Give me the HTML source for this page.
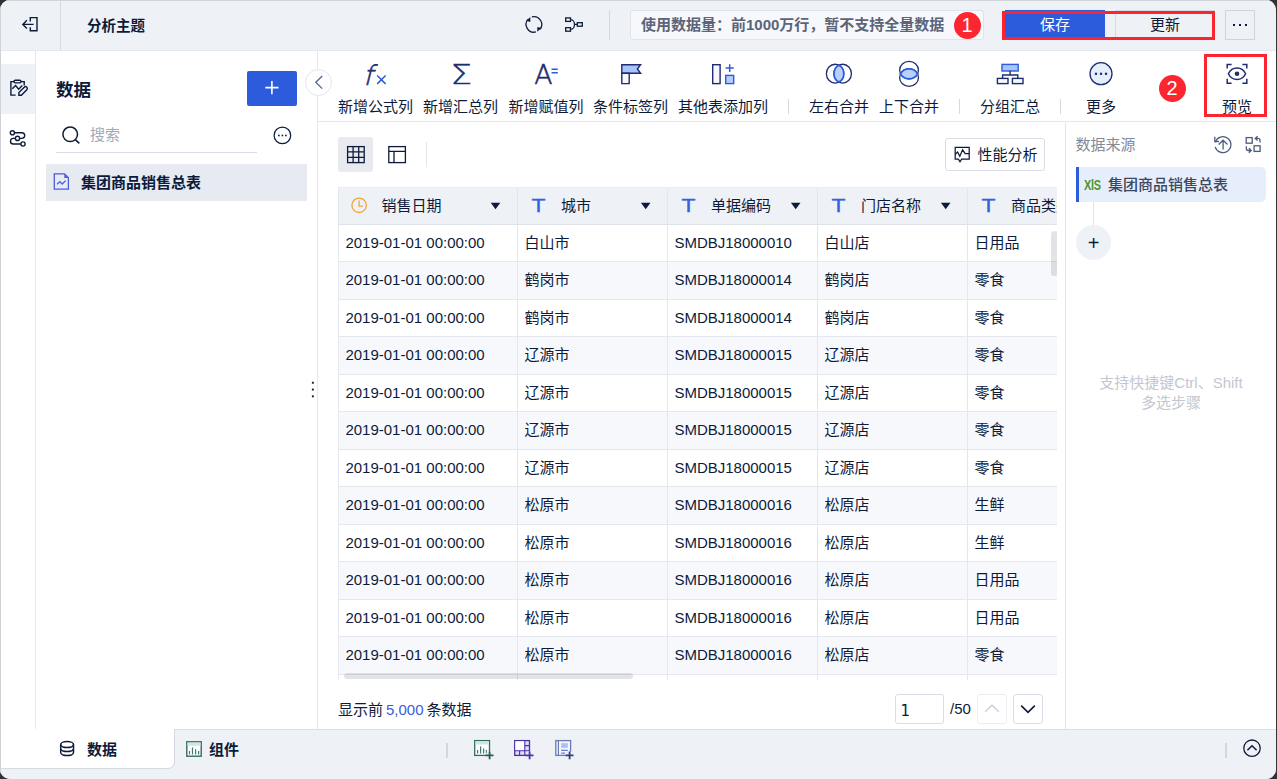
<!DOCTYPE html>
<html lang="zh-CN">
<head>
<meta charset="utf-8">
<title>分析主题</title>
<style>
*{box-sizing:border-box;margin:0;padding:0}
html,body{width:1277px;height:779px;overflow:hidden;background:#323232}
body{font-family:"Liberation Sans","Noto Sans CJK SC",sans-serif;font-size:15px;color:#0d1b3a;position:relative}
.abs{position:absolute}
svg{position:absolute;overflow:visible}
#win{position:absolute;left:0;top:0;width:1276px;height:779px;background:#fff;border-radius:10px;overflow:hidden}
#edgeT{position:absolute;left:0;top:0;width:1276px;height:1px;background:#d0d3da;z-index:9}
#edgeL{position:absolute;left:0;top:0;width:1px;height:779px;background:#cfd1d6;z-index:9}
/* top bar */
#topbar{position:absolute;left:0;top:0;width:1276px;height:51px;background:#eef1f6;border-bottom:1px solid #e4e7ee}
#title{position:absolute;left:87px;top:16px;font-size:14.5px;font-weight:bold;line-height:20px;color:#0d1b3a;white-space:nowrap}
.vline{position:absolute;width:1px;background:#d5d9e2}
#infobox{position:absolute;left:630px;top:10px;width:354px;height:30px;background:#f7f8fb;border:1px solid #dfe3ea;border-radius:3px}
#infobox span{position:absolute;left:10px;top:4px;line-height:20px;font-weight:bold;color:#5b6478;white-space:nowrap}
.redc{position:absolute;width:27px;height:27px;border-radius:50%;background:#fc2630;color:#fff;font-size:20px;line-height:27px;text-align:center}
.redbox{position:absolute;border:3px solid #fb2530;z-index:5}
#btnSave{position:absolute;left:1005px;top:10px;width:100px;height:30px;background:#2c5cdc;color:#fff;text-align:center;line-height:29px;font-size:15px}
#btnUpd{position:absolute;left:1115px;top:10px;width:100px;height:30px;border:1px solid #d5d9e2;color:#0d1b3a;text-align:center;line-height:27px;font-size:15px}
#btnMore{position:absolute;left:1225px;top:10px;width:30px;height:30px;border:1px solid #cdd2dd}
#btnMore i{position:absolute;top:13px;width:2px;height:2px;background:#0d1b3a}
/* left sidebar */
#lside{position:absolute;left:0;top:51px;width:36px;height:678px;background:#fff;border-right:1px solid #e4e7ee}
#lside .act{position:absolute;left:0;top:13px;width:35px;height:50px;background:#eef1f6}
#dpanel{position:absolute;left:36px;top:51px;width:282px;height:678px;background:#fff;border-right:1px solid #e4e7ee}
#dtitle{position:absolute;left:20px;top:27px;font-size:17.5px;font-weight:bold;line-height:24px;white-space:nowrap}
#addbtn{position:absolute;left:211px;top:20px;width:50px;height:35px;background:#2c5cdc;border-radius:2px}
#search{position:absolute;left:20px;top:66px;width:201px;height:36px;border-bottom:1px solid #d9dde6}
#search span{position:absolute;left:34px;top:8px;line-height:20px;color:#a3a9b8}
#ditem{position:absolute;left:10px;top:113px;width:261px;height:37px;background:#e8eaf2}
#ditem span{position:absolute;left:35px;top:9px;line-height:20px;font-weight:bold;white-space:nowrap}
#collapse{position:absolute;left:305px;top:69px;width:27px;height:27px;border-radius:50%;background:#fff;border:1px solid #e2e5ec;z-index:6}
/* toolbar */
#toolbar{position:absolute;left:318px;top:51px;width:958px;height:71px;background:#fff;border-bottom:1px solid #e4e7ee}
.tl{position:absolute;top:46px;line-height:20px;white-space:nowrap;text-align:center;color:#0d1b3a}
/* main */
#main{position:absolute;left:318px;top:122px;width:748px;height:607px;background:#fff;border-right:1px solid #e4e7ee}
#vtog{position:absolute;left:20px;top:15px;width:35px;height:35px;background:#e8eaef;border-radius:3px}
#perf{position:absolute;left:627px;top:16px;width:100px;height:33px;border:1px solid #d9dde6;border-radius:3px}
#perf span{position:absolute;left:31.5px;top:6px;line-height:20px;white-space:nowrap}
#tbl{position:absolute;left:20px;top:65px;width:719px;height:493px;overflow:hidden;border-left:1px solid #e4e7ee}
#tbl .in{position:absolute;left:0;top:0;width:900px}
.th{position:relative;height:37.5px;background:#eef1f6;border-top:1px solid #e9ecf2;border-bottom:1px solid #dfe3ea;display:flex}
.hc{position:relative;width:150px;height:100%;border-right:1px solid #e3e6ee;flex:none}
.hc.c1{width:179px}
.hc span{position:absolute;left:43px;top:8px;line-height:20px;white-space:nowrap}
.tr{height:37.5px;display:flex;border-bottom:1px solid #e4e7ee}
.tr.ev{background:#f7f8fc}
.td{width:150px;flex:none;border-right:1px solid #e4e7ee;padding:8px 0 0 6.4px;line-height:20px;white-space:nowrap;overflow:hidden}
.td.c1{width:179px}
#vsb{position:absolute;left:712px;top:44px;width:7px;height:45px;border-radius:4px;background:rgba(110,115,130,.2)}
#hsb{position:absolute;left:5px;top:486px;width:289px;height:6px;border-radius:3px;background:rgba(110,115,135,.2)}
#foot{position:absolute;left:20px;top:578px;line-height:20px;white-space:nowrap}
#foot em{font-style:normal;color:#3b5bdb;margin:0 3px}
#pginp{position:absolute;left:577px;top:572px;width:49px;height:30px;border:1px solid #d9dde6;border-radius:3px;font-size:15px;line-height:33px;padding-left:4.4px;font-family:"DejaVu Sans","Liberation Sans",sans-serif}
#pgtot{position:absolute;left:632px;top:576.5px;line-height:20px}
.pgb{position:absolute;top:572px;width:30px;height:30px;border:1px solid #d9dde6;border-radius:3px}
/* right panel */
#rpanel{position:absolute;left:1066px;top:122px;width:210px;height:607px;background:#fff}
#rtitle{position:absolute;left:9.5px;top:13px;line-height:20px;color:#838a9a;white-space:nowrap}
#ritem{position:absolute;left:10px;top:45px;width:190px;height:35px;background:#e6eefc;border-left:3px solid #2c5cdc;border-radius:0 5px 5px 0}
#ritem .x{position:absolute;left:5px;top:8px;line-height:20px;font-size:14px;font-weight:bold;color:#4a962c;letter-spacing:-0.3px;transform:scaleX(.78);transform-origin:left center}
#ritem .t{position:absolute;left:29px;top:8px;line-height:20px;color:#3d4860;font-weight:500;white-space:nowrap}
#rconn{position:absolute;left:27px;top:80px;width:1px;height:24px;background:#dfe3ea}
#rplus{position:absolute;left:10px;top:103px;width:35px;height:35px;border-radius:50%;background:#eef1f6;text-align:center;line-height:36px;font-size:20px;color:#0d1b3a}
#rhint{position:absolute;left:10px;top:251px;width:190px;text-align:center;line-height:20px;color:#c3c7d1}
/* bottom bar */
#bottombar{position:absolute;left:0;top:729px;width:1276px;height:50px;background:#eef1f6;border-top:1px solid #d9dde6}
#tab1{position:absolute;left:0;top:-1px;width:175px;height:40px;background:#fff;border-right:1px solid #d5d9e2;border-bottom:1px solid #d5d9e2;border-radius:0 0 7px 0}
#tab1 span{position:absolute;left:87px;top:11px;line-height:20px;font-weight:bold}
#tab2{position:absolute;left:209px;top:10px;line-height:20px;font-weight:bold;white-space:nowrap}
</style>
</head>
<body>
<div id="win">
<div id="topbar">
  <div class="vline" style="left:60px;top:0;height:50px"></div>
  <div id="title">分析主题</div>
  <div class="vline" style="left:609px;top:10px;height:30px"></div>
  <div id="infobox"><span>使用数据量：前1000万行，暂不支持全量数据</span></div>
  <div class="redc" style="left:953.5px;top:11.5px">1</div>
  <div id="btnSave">保存</div>
  <div id="btnUpd">更新</div>
  <div class="redbox" style="left:1002px;top:11px;width:213px;height:29px"></div>
  <div id="btnMore"><i style="left:7px"></i><i style="left:13px"></i><i style="left:19px"></i></div>
</div>
<div id="lside"><div class="act"></div></div>
<div id="dpanel">
  <div id="dtitle">数据</div>
  <div id="addbtn"></div>
  <div id="search"><span>搜索</span></div>
  <div id="ditem"><span>集团商品销售总表</span></div>
</div>
<div id="collapse"></div>
<div id="toolbar">
  <div class="tl" style="left:15px;width:85px">新增公式列</div>
  <div class="tl" style="left:100px;width:85px">新增汇总列</div>
  <div class="tl" style="left:185.5px;width:85px">新增赋值列</div>
  <div class="tl" style="left:270px;width:85px">条件标签列</div>
  <div class="tl" style="left:355px;width:100px">其他表添加列</div>
  <div class="vline" style="left:470px;top:48px;height:15px"></div>
  <div class="tl" style="left:486px;width:70px">左右合并</div>
  <div class="tl" style="left:556px;width:70px">上下合并</div>
  <div class="vline" style="left:641px;top:48px;height:15px"></div>
  <div class="tl" style="left:657px;width:70px">分组汇总</div>
  <div class="vline" style="left:742px;top:48px;height:15px"></div>
  <div class="tl" style="left:758px;width:50px">更多</div>
  <div class="redc" style="left:840.5px;top:23.6px">2</div>
  <div class="tl" style="left:894px;width:50px">预览</div>
  <div class="redbox" style="left:886px;top:3px;width:63px;height:63px"></div>
</div>
<div id="main">
  <div id="vtog"></div>
  <div class="vline" style="left:108px;top:20px;height:25px;background:#e4e7ee"></div>
  <div id="perf"><span>性能分析</span></div>
  <div id="tbl"><div class="in">
    <div class="th">
      <div class="hc c1"><span style="left:42.5px">销售日期</span></div>
      <div class="hc"><span>城市</span></div>
      <div class="hc"><span>单据编码</span></div>
      <div class="hc"><span>门店名称</span></div>
      <div class="hc"><span>商品类别</span></div>
    </div>
<div class="tr"><div class="td c1">2019-01-01 00:00:00</div><div class="td">白山市</div><div class="td">SMDBJ18000010</div><div class="td">白山店</div><div class="td">日用品</div></div>
<div class="tr ev"><div class="td c1">2019-01-01 00:00:00</div><div class="td">鹤岗市</div><div class="td">SMDBJ18000014</div><div class="td">鹤岗店</div><div class="td">零食</div></div>
<div class="tr"><div class="td c1">2019-01-01 00:00:00</div><div class="td">鹤岗市</div><div class="td">SMDBJ18000014</div><div class="td">鹤岗店</div><div class="td">零食</div></div>
<div class="tr ev"><div class="td c1">2019-01-01 00:00:00</div><div class="td">辽源市</div><div class="td">SMDBJ18000015</div><div class="td">辽源店</div><div class="td">零食</div></div>
<div class="tr"><div class="td c1">2019-01-01 00:00:00</div><div class="td">辽源市</div><div class="td">SMDBJ18000015</div><div class="td">辽源店</div><div class="td">零食</div></div>
<div class="tr ev"><div class="td c1">2019-01-01 00:00:00</div><div class="td">辽源市</div><div class="td">SMDBJ18000015</div><div class="td">辽源店</div><div class="td">零食</div></div>
<div class="tr"><div class="td c1">2019-01-01 00:00:00</div><div class="td">辽源市</div><div class="td">SMDBJ18000015</div><div class="td">辽源店</div><div class="td">零食</div></div>
<div class="tr ev"><div class="td c1">2019-01-01 00:00:00</div><div class="td">松原市</div><div class="td">SMDBJ18000016</div><div class="td">松原店</div><div class="td">生鲜</div></div>
<div class="tr"><div class="td c1">2019-01-01 00:00:00</div><div class="td">松原市</div><div class="td">SMDBJ18000016</div><div class="td">松原店</div><div class="td">生鲜</div></div>
<div class="tr ev"><div class="td c1">2019-01-01 00:00:00</div><div class="td">松原市</div><div class="td">SMDBJ18000016</div><div class="td">松原店</div><div class="td">日用品</div></div>
<div class="tr"><div class="td c1">2019-01-01 00:00:00</div><div class="td">松原市</div><div class="td">SMDBJ18000016</div><div class="td">松原店</div><div class="td">日用品</div></div>
<div class="tr ev"><div class="td c1">2019-01-01 00:00:00</div><div class="td">松原市</div><div class="td">SMDBJ18000016</div><div class="td">松原店</div><div class="td">零食</div></div>
<div class="tr"><div class="td c1">2019-01-01 00:00:00</div><div class="td">松原市</div><div class="td">SMDBJ18000016</div><div class="td">松原店</div><div class="td">零食</div></div>
  </div>
  <div id="vsb"></div>
  <div id="hsb"></div>
  </div>
  <div id="foot">显示前<em>5,000</em>条数据</div>
  <div id="pginp">1</div>
  <div id="pgtot">/50</div>
  <div class="pgb" style="left:659px;border-color:#eceef3"></div>
  <div class="pgb" style="left:695px"></div>
</div>
<div id="rpanel">
  <div id="rtitle">数据来源</div>
  <div id="ritem"><span class="x">XlS</span><span class="t">集团商品销售总表</span></div>
  <div id="rconn"></div>
  <div id="rplus">+</div>
  <div id="rhint">支持快捷键Ctrl、Shift<br>多选步骤</div>
</div>
<div id="bottombar">
  <div id="tab1"><span>数据</span></div>
  <div id="tab2">组件</div>
  <div class="vline" style="left:446px;top:13px;height:15px;width:2px;background:#d3d7e0"></div>
  <div class="vline" style="left:1225px;top:13px;height:15px;width:2px;background:#d3d7e0"></div>
</div>
<svg id="ico" style="left:0;top:0;z-index:7" width="1276" height="779" viewBox="0 0 1276 779" fill="none" stroke-linecap="butt">
<!-- exit icon -->
<g stroke="#0d1b3a" stroke-width="1.4">
  <path d="M30.3,21.6V17.6H37V30.8H30.3V27.2"/>
  <path d="M22.6,24.4H33.6M26.9,20.3L22.8,24.4L26.9,28.5"/>
</g>
<!-- refresh -->
<g stroke="#0d1b3a" stroke-width="1.3">
  <path d="M531.9,16.9A7.8,7.8 0 0 1 539.9,29.4"/>
  <path d="M535.9,31.9A7.8,7.8 0 0 1 527.9,19.4"/>
</g>
<path d="M537.3,26.9V31.8L541.3,28Z" fill="#0d1b3a"/>
<path d="M530.3,21.9V17L526.4,20.8Z" fill="#0d1b3a"/>
<!-- flow -->
<g stroke="#0d1b3a" stroke-width="1.3">
  <rect x="565.7" y="17.9" width="4.8" height="3.5"/>
  <rect x="565.7" y="27.7" width="4.8" height="3.5"/>
  <rect x="577.3" y="22.7" width="5" height="3.5"/>
  <path d="M570.5,19.6C573.4,19.6 574.5,22.4 574.5,24.45C574.5,26.5 573.4,29.4 570.5,29.4M574.5,24.45H577.3"/>
</g>
<!-- sidebar clipboard -->
<g stroke="#0d1b3a" stroke-width="1.4">
  <path d="M14,81.6H10.9V95.1H15.6M21,81.6H24.2V85.4"/>
  <rect x="14" y="80.2" width="7" height="2.7" rx="1.35"/>
  <path d="M12.3,88.8L15.6,85.5L18.7,89.2L22.2,85.6"/>
  <path d="M18.9,95.2L18.9,92.6L24.3,87.2A1.7,1.7 0 0 1 26.8,89.7L21.4,95.2Z"/>
</g>
<!-- sidebar route -->
<g stroke="#0d1b3a" stroke-width="1.4">
  <circle cx="12.4" cy="132.8" r="2.1"/>
  <circle cx="17.5" cy="138.4" r="2.1"/>
  <circle cx="23" cy="144" r="2.1"/>
  <path d="M14.5,132.8H21.9A2.8,2.8 0 0 1 21.9,138.4H19.6M15.4,138.4H13.3A2.8,2.8 0 0 0 13.3,144H20.9"/>
</g>
<!-- search -->
<g stroke="#0d1b3a" stroke-width="1.5">
  <circle cx="70.2" cy="134.3" r="7.3"/>
  <path d="M75.4,139.6L79.3,143.4"/>
</g>
<!-- more circle -->
<circle cx="282.4" cy="135.4" r="8.3" stroke="#0d1b3a" stroke-width="1.2"/>
<g fill="#0d1b3a"><rect x="278.1" y="134.7" width="1.6" height="1.6"/><rect x="281.6" y="134.7" width="1.6" height="1.6"/><rect x="285.1" y="134.7" width="1.6" height="1.6"/></g>
<path d="M265.3,87.6H278.5M271.9,81V94.2" stroke="#fff" stroke-width="1.6"/>
<!-- file icon -->
<g stroke="#4a5ce0" stroke-width="1.3">
  <path d="M54.3,173.9H64.5L68.4,177.8V189.1H54.3Z"/>
  <path d="M57.2,184.3L59.8,181.6L62.2,184L65.6,180.6"/>
</g>
<path d="M64.3,173.7L68.6,178H64.3Z" fill="#4a5ce0"/>
<!-- collapse chevron -->
<path d="M322.2,76L315.8,82.3L322.2,88.6" stroke="#50639a" stroke-width="1.3"/>
<!-- resize dots -->
<g fill="#0d1b3a"><rect x="311.9" y="381.8" width="1.9" height="1.9"/><rect x="311.9" y="388.6" width="1.9" height="1.9"/><rect x="311.9" y="395.4" width="1.9" height="1.9"/></g>
<!-- TOOLBAR -->
<!-- fx -->
<text x="0" y="0" transform="translate(362.9,84.6) skewX(-14)" font-family="'DejaVu Sans Light','DejaVu Sans',sans-serif" font-weight="200" font-size="27.2" fill="#1f2d6e" stroke="#1f2d6e" stroke-width="0.6">f</text>
<path d="M377.2,75.5L385.6,83.9M385.6,75.5L377.2,83.9" stroke="#2c5cdc" stroke-width="1.5"/>
<!-- sigma -->
<text x="0" y="0" transform="translate(461.2,84.1) scale(1.3,1)" text-anchor="middle" font-family="'DejaVu Sans Light','DejaVu Sans',sans-serif" font-weight="200" font-size="26.2" fill="#1f2d6e" stroke="#1f2d6e" stroke-width="0.5">Σ</text>
<!-- A= -->
<text x="0" y="0" text-anchor="middle" transform="translate(543.4,84.1) scale(1.02,1)" font-family="'DejaVu Sans Light','DejaVu Sans',sans-serif" font-weight="200" font-size="26.2" fill="#1f2d6e" stroke="#1f2d6e" stroke-width="0.5">A</text>
<path d="M551.6,69.2H557.8M551.6,72.8H557.8" stroke="#2c5cdc" stroke-width="1.4"/>
<!-- flag -->
<path d="M621.8,64.7H640.6L637.4,69L640.6,73.3H621.8Z" fill="#a9c4fb" stroke="#1f2d6e" stroke-width="1.4"/>
<path d="M621.8,73.3H629.2V83.6H621.8Z" stroke="#1f2d6e" stroke-width="1.4" fill="#f5f8ff"/>
<!-- other table add -->
<rect x="712.7" y="64.7" width="7.4" height="18.9" stroke="#1f2d6e" stroke-width="1.4" fill="#f5f8ff"/>
<rect x="725.7" y="75.4" width="8" height="8.2" stroke="#2c5cdc" stroke-width="1.4" fill="#b5cdfb"/>
<path d="M729.7,64.2V72M725.6,68.1H733.8" stroke="#2c5cdc" stroke-width="1.5"/>
<!-- left-right merge -->
<ellipse cx="835.1" cy="73.65" rx="8.7" ry="9.4" stroke="#1f2d6e" stroke-width="1.3"/>
<ellipse cx="842.7" cy="73.65" rx="8.7" ry="9.4" stroke="#1f2d6e" stroke-width="1.3"/>
<path d="M838.9,65.19A8.7,9.4 0 0 1 838.9,82.11A8.7,9.4 0 0 1 838.9,65.19Z" fill="#b9d0fb" stroke="#2c5cdc" stroke-width="1.7" stroke-linejoin="round"/>
<!-- up-down merge -->
<ellipse cx="909.05" cy="70.15" rx="9.4" ry="8.7" stroke="#1f2d6e" stroke-width="1.3"/>
<ellipse cx="909.05" cy="77.65" rx="9.4" ry="8.7" stroke="#1f2d6e" stroke-width="1.3"/>
<path d="M900.57,73.9A9.4,8.7 0 0 1 917.53,73.9A9.4,8.7 0 0 1 900.57,73.9Z" fill="#b9d0fb" stroke="#2c5cdc" stroke-width="1.7" stroke-linejoin="round"/>
<!-- group summary -->
<rect x="1002" y="64.4" width="16.2" height="6.6" fill="#a9c4fb" stroke="#2c5cdc" stroke-width="1.4"/>
<path d="M1010.1,71V75M1002.6,78.4V75H1017.8V78.4" stroke="#1f2d6e" stroke-width="1.4"/>
<rect x="997.4" y="78.4" width="10.6" height="5.2" stroke="#1f2d6e" stroke-width="1.4" fill="#f5f8ff"/>
<rect x="1012.4" y="78.4" width="10.6" height="5.2" stroke="#1f2d6e" stroke-width="1.4" fill="#f5f8ff"/>
<!-- more -->
<circle cx="1101" cy="73.7" r="11" fill="#e6eefc" stroke="#1f2d6e" stroke-width="1.3"/>
<g fill="#1f2d6e"><rect x="1094.9" y="72.7" width="2.2" height="2.2"/><rect x="1099.9" y="72.7" width="2.2" height="2.2"/><rect x="1104.9" y="72.7" width="2.2" height="2.2"/></g>
<!-- preview -->
<g stroke="#1f2d6e" stroke-width="1.5">
  <path d="M1227.2,68.6V64.4H1231.6M1242.4,64.4H1246.8V68.6M1246.8,78.8V83.2H1242.4M1231.6,83.2H1227.2V78.8"/>
  <path d="M1228.4,73.8C1232,66.2 1242,66.2 1245.6,73.8C1242,81.4 1232,81.4 1228.4,73.8Z"/>
</g>
<circle cx="1237" cy="73.8" r="2.3" fill="#1f2d6e"/>
<!-- view toggle icons -->
<g stroke="#0d1b3a" stroke-width="1.3">
  <rect x="347.6" y="146.6" width="16.6" height="16"/>
  <path d="M353.1,146.6V162.6M358.7,146.6V162.6M347.6,151.9H364.2M347.6,157.3H364.2"/>
  <rect x="388.8" y="146.6" width="16.6" height="16"/>
  <path d="M388.8,151.3H405.4M394,151.3V162.6"/>
</g>
<!-- perf icon -->
<g stroke="#0d1b3a" stroke-width="1.25">
  <path d="M955.2,147.4H969.2V159.2H961.6L960,161.8L958.4,159.2H955.2Z"/>
  <path d="M955.2,154.2L957.6,152L959.8,156.2L962.6,149.8L965.2,153.6H969.2"/>
</g>
<!-- header icons -->
<g stroke="#f0a53a" stroke-width="1.3">
  <circle cx="359.1" cy="205.3" r="7.2"/>
  <path d="M359.1,200.6V206.2H363.2"/>
</g>
<g fill="#3560e0" stroke="#3560e0" stroke-width="0.28" font-family="'Liberation Sans',sans-serif" font-size="17.6" text-anchor="middle">
  <text transform="translate(538.5,212.1) scale(1.3,1)">T</text>
  <text transform="translate(688.5,212.1) scale(1.3,1)">T</text>
  <text transform="translate(838.5,212.1) scale(1.3,1)">T</text>
  <text transform="translate(988.5,212.1) scale(1.3,1)">T</text>
</g>
<g fill="#0d1b3a"><path d="M490.7,202.7H500.3L495.5,209.2Z"/><path d="M640.9,202.7H650.5L645.7,209.2Z"/><path d="M790.9,202.7H800.5L795.7,209.2Z"/><path d="M940.9,202.7H950.5L945.7,209.2Z"/></g>
<!-- pager chevrons -->
<path d="M985.2,711.8L992,705.2L998.8,711.8" stroke="#c9cdd8" stroke-width="1.3"/>
<path d="M1021.2,705.6L1028,712.4L1034.8,705.6" stroke="#0d1b3a" stroke-width="1.6"/>
<!-- right panel icons -->
<g stroke="#4d5b7c" stroke-width="1.3">
  <path d="M1215.3,142.2A8,8 0 1 1 1215.2,146.8"/>
  <path d="M1214.8,136.8V141.5H1218.9"/>
  <path d="M1223.1,140.2V149.4M1218.7,144.5L1223.1,140.2L1227.5,144.5"/>
  <rect x="1246.2" y="137.6" width="6" height="5.6"/>
  <rect x="1254.1" y="145.8" width="6" height="5.6"/>
  <path d="M1260,142.6V140.4Q1260,138.4 1258,138.4H1255.6M1257.6,136.2L1255.2,138.4L1257.6,140.6"/>
  <path d="M1246.3,146.2V148.6Q1246.3,150.5 1248.3,150.5H1250.8M1248.8,148.3L1251.2,150.5L1248.8,152.7"/>
</g>
<!-- bottom bar icons -->
<g stroke="#0d1b3a" stroke-width="1.5">
  <ellipse cx="67.1" cy="744.6" rx="6.4" ry="3"/>
  <path d="M60.7,744.6V752.6A6.4,3 0 0 0 73.5,752.6V744.6M60.7,748.6A6.4,3 0 0 0 73.5,748.6"/>
</g>
<!-- component icon -->
<rect x="186.8" y="741.8" width="14.4" height="14.4" fill="#fff" stroke="#336b5f" stroke-width="1.4"/>
<rect x="187.5" y="742.5" width="13" height="3.2" fill="#cfe6de"/>
<path d="M189.5,751V754.4M192.5,747.4V754.4M195.6,749.2V754.4M198.6,751V754.4" stroke="#3d7a6c" stroke-width="1.2"/>
<!-- bottom add icons -->
<rect x="474.7" y="740.6" width="14.8" height="14.8" fill="#fff" stroke="#336b5f" stroke-width="1.3"/>
<rect x="475.4" y="741.3" width="13.4" height="3.2" fill="#cfe6de"/>
<path d="M477.6,750V753.4M480.6,746.6V753.4M483.6,748.4V753.4M486.4,750V753.4" stroke="#3d7a6c" stroke-width="1.2"/>
<rect x="486.6" y="751.6" width="6" height="6" fill="#eef1f6"/><path d="M485.7,755.3H493.5M489.6,751.4V759.2" stroke="#2a5c50" stroke-width="1.8"/>
<rect x="514.7" y="740.6" width="14.8" height="14.8" fill="#e1dcf7" stroke="#4b32a8" stroke-width="1.3"/>
<rect x="515.4" y="741.3" width="9.4" height="9.4" fill="#fff"/>
<path d="M524.8,740.6V755.4M514.7,750.7H529.5M519.6,750.7V755.4M524.8,745.6H529.5" stroke="#4b32a8" stroke-width="1.1"/>
<rect x="526.6" y="751.6" width="6" height="6" fill="#eef1f6"/><path d="M525.7,755.3H533.5M529.6,751.4V759.2" stroke="#4b32a8" stroke-width="1.8"/>
<rect x="555.8" y="740.6" width="14.8" height="14.8" fill="#f4f6fc" stroke="#6a7bb5" stroke-width="1.3"/>
<path d="M558.4,740.6V755.4" stroke="#6a7bb5" stroke-width="1.2"/>
<rect x="561.2" y="743.2" width="6.6" height="4.6" fill="#a9c0f0"/>
<path d="M561.2,750.4H567.8M561.2,753.2H565" stroke="#5b7fe0" stroke-width="1.2"/>
<rect x="566.6" y="751.6" width="6" height="6" fill="#eef1f6"/><path d="M565.7,755.3H573.5M569.6,751.4V759.2" stroke="#2d3f80" stroke-width="1.8"/>
<!-- bottom right -->
<circle cx="1252" cy="748.2" r="8.2" stroke="#0d1b3a" stroke-width="1.3"/>
<path d="M1247.4,750.2L1252,745.8L1256.6,750.2" stroke="#0d1b3a" stroke-width="1.5"/>
</svg>

<div id="edgeT"></div><div id="edgeL"></div>
</div>
</body>
</html>
